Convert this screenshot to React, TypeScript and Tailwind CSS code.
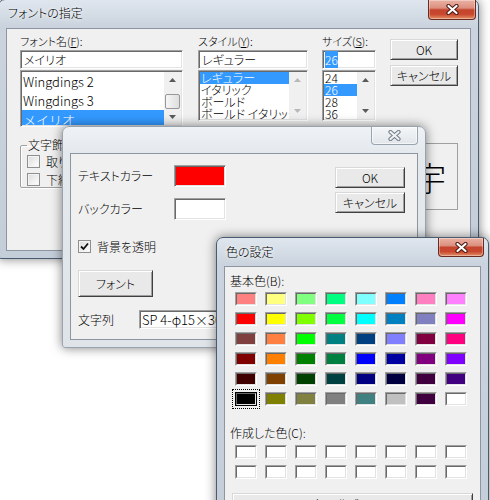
import React from 'react';

const basicColors = [
  ['#ff8080', '#ffff80', '#80ff80', '#00ff80', '#80ffff', '#0080ff', '#ff80c0', '#ff80ff'],
  ['#ff0000', '#ffff00', '#80ff00', '#00ff40', '#00ffff', '#0080c0', '#8080c0', '#ff00ff'],
  ['#804040', '#ff8040', '#00ff00', '#008080', '#004080', '#8080ff', '#800040', '#ff0080'],
  ['#800000', '#ff8000', '#008000', '#008040', '#0000ff', '#0000a0', '#800080', '#8000ff'],
  ['#400000', '#804000', '#004000', '#004040', '#000080', '#000040', '#400040', '#400080'],
  ['#000000', '#808000', '#808040', '#808080', '#408080', '#c0c0c0', '#400040', '#ffffff'],
];

function CloseX({ active }: { active: boolean }) {
  return (
    <svg width="13" height="11" viewBox="0 0 13 11">
      <path d="M2.5 2 L10.5 9 M10.5 2 L2.5 9" stroke={active ? '#4a1a12' : '#737d88'} strokeWidth="4.2" strokeLinecap="round" fill="none" />
      <path d="M2.5 2 L10.5 9 M10.5 2 L2.5 9" stroke={active ? '#ffffff' : '#eef1f4'} strokeWidth="2.2" strokeLinecap="round" fill="none" />
    </svg>
  );
}

function Frame({
  pos,
  titleH,
  titlePad,
  closeCls,
  title,
  active,
  children,
}: {
  pos: string;
  titleH: string;
  titlePad: string;
  closeCls: string;
  title?: string;
  active: boolean;
  children: React.ReactNode;
}) {
  return (
    <div
      className={`absolute flex flex-col rounded-t-[7px] rounded-b-[3px] border shadow-[0_0_11px_rgba(0,0,0,0.5)] ${
        active
          ? 'border-[#4a5b6f] bg-[linear-gradient(180deg,#dfe6ee_0px,#cbd4de_26px,#c4ced8_100%)]'
          : 'border-[#99a3ae] bg-[linear-gradient(180deg,#eff2f5_0px,#e4e9ee_26px,#dfe4e9_100%)]'
      } ${pos}`}
    >
      <div className={`flex shrink-0 items-start justify-between ${titleH}`}>
        <span className={`text-[12px] leading-[16px] [text-shadow:0_0_6px_#fff,0_0_3px_#fff] ${titlePad}`}>{title}</span>
        <div
          className={`flex items-center justify-center rounded-b-[4px] border border-t-0 ${
            active
              ? 'border-[#6b2a1e] bg-[linear-gradient(180deg,#eab2a4_0%,#dc8f7e_42%,#c4452d_52%,#c9472e_75%,#e28f66_100%)] shadow-[inset_0_0_0_1px_rgba(255,255,255,0.35)]'
              : 'border-[#9aa4ae] bg-[linear-gradient(180deg,#f4f6f8,#e1e6eb)] shadow-[inset_0_0_0_1px_rgba(255,255,255,0.6)]'
          } ${closeCls}`}
        >
          <CloseX active={active} />
        </div>
      </div>
      <div className="mx-[7px] mb-[7px] flex-1 overflow-hidden border border-[#8d96a0] bg-[#f0f0f0]">{children}</div>
    </div>
  );
}

function Sunken({ className = '', children, style }: { className?: string; children?: React.ReactNode; style?: React.CSSProperties }) {
  return (
    <div
      className={`border border-t-[#a0a0a0] border-l-[#a0a0a0] border-r-white border-b-white p-[1px] shadow-[inset_1px_1px_0_#696969,inset_-1px_-1px_0_#e3e3e3] ${className}`}
      style={style}
    >
      {children}
    </div>
  );
}

function Btn({ className = '', children }: { className?: string; children: React.ReactNode }) {
  return (
    <div
      className={`flex shrink-0 items-center justify-center whitespace-nowrap border border-t-[#d8d8d8] border-l-[#d8d8d8] border-r-[#404040] border-b-[#404040] bg-[#e9e9e9] text-[12px] leading-[14px] shadow-[inset_1px_1px_0_#ffffff,inset_-1px_-1px_0_#a0a0a0] ${className}`}
    >
      {children}
    </div>
  );
}

function Tri({ up, color }: { up?: boolean; color: string }) {
  return (
    <svg width="7" height="4" viewBox="0 0 7 4">
      <path d={up ? 'M0 4 L3.5 0 L7 4 Z' : 'M0 0 L3.5 4 L7 0 Z'} fill={color} />
    </svg>
  );
}

function ScrollBar({ thumb, disabled }: { thumb?: boolean; disabled?: boolean }) {
  const c = disabled ? '#b8b8b8' : '#5a5a5a';
  return (
    <div className="flex w-[17px] shrink-0 flex-col bg-[#f0f0f0]">
      <div className="flex h-[16px] shrink-0 items-center justify-center">
        <Tri up color={c} />
      </div>
      <div className="flex-1">
        {thumb && (
          <div className="mx-[1px] mt-[6px] h-[15px] rounded-[2px] border border-[#979797] bg-[linear-gradient(90deg,#f6f6f6,#dedede)]" />
        )}
      </div>
      <div className="flex h-[16px] shrink-0 items-center justify-center">
        <Tri color={c} />
      </div>
    </div>
  );
}

function CheckBox({ checked }: { checked?: boolean }) {
  return (
    <div className="flex h-[13px] w-[13px] shrink-0 items-center justify-center border border-[#8e8f8f] bg-[linear-gradient(135deg,#dcdcdc,#ffffff)] shadow-[inset_0_0_0_1px_#f4f4f4]">
      {checked && (
        <svg width="9" height="9" viewBox="0 0 9 9">
          <path d="M1 4.5 L3.5 7 L8 1.5" stroke="#111" strokeWidth="1.8" fill="none" />
        </svg>
      )}
    </div>
  );
}

function Label({ children }: { children: React.ReactNode }) {
  return <div className="h-[14px] text-[11px] leading-[14px]">{children}</div>;
}

function FontDialog() {
  return (
    <Frame
      pos="left-[-2px] top-[-1px] h-[260px] w-[481px]"
      titleH="h-[28px]"
      titlePad="pl-[9px] pt-[5px]"
      closeCls="mr-[2px] h-[20px] w-[48px]"
      title="フォントの指定"
      active
    >
      <div className="pl-[13px] pt-[5px]">
        <div className="flex items-start">
          <div className="w-[163px]">
            <Label>
              フォント名(<u>F</u>):
            </Label>
            <Sunken className="mt-[2px] h-[19px] bg-white px-[3px] text-[12px] leading-[15px]">メイリオ</Sunken>
            <Sunken className="mt-[1px] flex h-[57px] bg-white">
              <div className="flex-1 overflow-hidden">
                <div className="h-[19px] pl-[1px] text-[13px] leading-[19px]">Wingdings 2</div>
                <div className="h-[19px] pl-[1px] text-[13px] leading-[19px]">Wingdings 3</div>
                <div className="h-[19px] bg-[#3399ff] pl-[1px] text-[13px] leading-[19px] text-white [font-feature-settings:normal]">
                  メイリオ
                </div>
              </div>
              <ScrollBar thumb />
            </Sunken>
          </div>

          <div className="ml-[15px] w-[110px]">
            <Label>
              スタイル(<u>Y</u>):
            </Label>
            <Sunken className="mt-[2px] h-[19px] bg-white px-[3px] text-[12px] leading-[15px]">レギュラー</Sunken>
            <Sunken className="mt-[1px] flex h-[51px] bg-white">
              <div className="flex-1 overflow-hidden whitespace-nowrap text-[12px] leading-[12px]">
                <div className="h-[12px] bg-[#3399ff] pl-[1px] text-white">レギュラー</div>
                <div className="h-[12px] pl-[1px]">イタリック</div>
                <div className="h-[12px] pl-[1px]">ボールド</div>
                <div className="h-[12px] pl-[1px]">ボールド イタリック</div>
              </div>
              <ScrollBar disabled />
            </Sunken>
          </div>

          <div className="ml-[14px] w-[54px]">
            <Label>
              サイズ(<u>S</u>):
            </Label>
            <Sunken className="mt-[2px] h-[19px] bg-white px-[2px] text-[12px] leading-[15px]">
              <span className="bg-[#3399ff] text-white">26</span>
            </Sunken>
            <Sunken className="mt-[1px] flex h-[51px] bg-white">
              <div className="flex-1 overflow-hidden text-[12px] leading-[12px]">
                <div className="h-[12px] pl-[1px]">24</div>
                <div className="h-[12px] bg-[#3399ff] pl-[1px] text-white">26</div>
                <div className="h-[12px] pl-[1px]">28</div>
                <div className="h-[12px] pl-[1px]">36</div>
              </div>
              <ScrollBar />
            </Sunken>
          </div>

          <div className="ml-[14px] mt-[5px] flex w-[68px] flex-col gap-[5px]">
            <Btn className="h-[21px]">OK</Btn>
            <Btn className="h-[21px]">キャンセル</Btn>
          </div>
        </div>

        <div className="mt-[12px] flex items-start">
          <fieldset className="h-[49px] w-[168px] rounded-[2px] border border-[#a0a0a0] px-[6px] shadow-[inset_1px_1px_0_#fff,1px_1px_0_#fff]">
            <legend className="px-[1px] text-[12px] leading-[12px]">文字飾り</legend>
            <div className="mt-[4px] flex items-center gap-[6px] text-[12px] leading-[13px]">
              <CheckBox />
              <span>取り消し線(K)</span>
            </div>
            <div className="mt-[5px] flex items-center gap-[6px] text-[12px] leading-[13px]">
              <CheckBox />
              <span>下線(U)</span>
            </div>
          </fieldset>
          <div className="ml-[10px] mt-[4px] flex h-[67px] w-[260px] items-center justify-center overflow-hidden whitespace-nowrap border border-[#a0a0a0] text-[33px] leading-[40px] [font-feature-settings:normal]">
            Aaあぁアァ亜宇
          </div>
        </div>
      </div>
    </Frame>
  );
}

function TextDialog() {
  return (
    <Frame
      pos="left-[62px] top-[126px] h-[222px] w-[364px]"
      titleH="h-[26px]"
      titlePad="pl-[9px] pt-[5px]"
      closeCls="mr-[7px] h-[18px] w-[47px]"
      active={false}
    >
      <div className="flex justify-between pl-[7px] pr-[12px] pt-[11px] text-[12px]">
        <div className="flex min-w-0 flex-col">
          <div className="flex h-[22px] items-center">
            <span className="w-[96px]">テキストカラー</span>
            <Sunken className="h-[22px] w-[52px]">
              <div className="h-full w-full bg-[#ff0000]" />
            </Sunken>
          </div>
          <div className="mt-[11px] flex h-[22px] items-center">
            <span className="w-[96px]">バックカラー</span>
            <Sunken className="h-[22px] w-[52px] bg-white" />
          </div>
          <div className="mt-[20px] flex items-center gap-[6px] leading-[13px]">
            <CheckBox checked />
            <span>背景を透明</span>
          </div>
          <Btn className="mt-[17px] h-[27px] w-[75px]">フォント</Btn>
          <div className="mt-[13px] flex items-center">
            <span className="w-[61px] shrink-0">文字列</span>
            <Sunken className="h-[19px] w-[180px] shrink-0 overflow-hidden whitespace-nowrap bg-white px-[2px] text-[13px] leading-[15px]">
              SP 4-φ15×30
            </Sunken>
          </div>
        </div>
        <div className="mt-[2px] flex w-[70px] shrink-0 flex-col gap-[4px]">
          <Btn className="h-[21px]">OK</Btn>
          <Btn className="h-[21px]">キャンセル</Btn>
        </div>
      </div>
    </Frame>
  );
}

function Cell({ color, selected }: { color: string; selected?: boolean }) {
  return (
    <div className={selected ? 'outline outline-1 outline-offset-[2px] outline-dotted outline-black' : ''}>
      <div
        className={`h-[14px] w-[22px] border ${
          selected ? 'border-black' : 'border-t-[#a0a0a0] border-l-[#a0a0a0] border-r-white border-b-white'
        }`}
      >
        <div
          className="h-full w-full border border-t-[#696969] border-l-[#696969] border-r-[#e3e3e3] border-b-[#e3e3e3]"
          style={{ backgroundColor: color }}
        />
      </div>
    </div>
  );
}

function ColorDialog() {
  return (
    <Frame
      pos="left-[216px] top-[237px] h-[290px] w-[273px]"
      titleH="h-[28px]"
      titlePad="pl-[9px] pt-[6px]"
      closeCls="mr-[4px] h-[19px] w-[46px]"
      title="色の設定"
      active
    >
      <div className="pl-[5px] pt-[8px] text-[12px]">
        <div className="leading-[12px]">基本色(B):</div>
        <div className="ml-[5px] mt-[5px] grid grid-cols-[repeat(8,22px)] gap-x-[8px] gap-y-[6px]">
          {basicColors.map((row, r) =>
            row.map((c, i) => <Cell key={`${r}-${i}`} color={c} selected={r === 5 && i === 0} />)
          )}
        </div>
        <div className="mt-[21px] leading-[12px]">作成した色(C):</div>
        <div className="ml-[5px] mt-[6px] grid grid-cols-[repeat(8,22px)] gap-x-[8px] gap-y-[6px]">
          {Array.from({ length: 16 }).map((_, i) => (
            <Cell key={i} color="#ffffff" />
          ))}
        </div>
        <Btn className="ml-[2px] mt-[14px] h-[23px] w-[241px]">
          色の作成(<u>D</u>) &gt;&gt;
        </Btn>
      </div>
    </Frame>
  );
}

export default function App() {
  return (
    <div className="relative h-[500px] w-[490px] overflow-hidden bg-white font-['Noto_Sans_CJK_JP',sans-serif] font-light text-black [font-feature-settings:'palt']">
      <FontDialog />
      <TextDialog />
      <ColorDialog />
    </div>
  );
}
